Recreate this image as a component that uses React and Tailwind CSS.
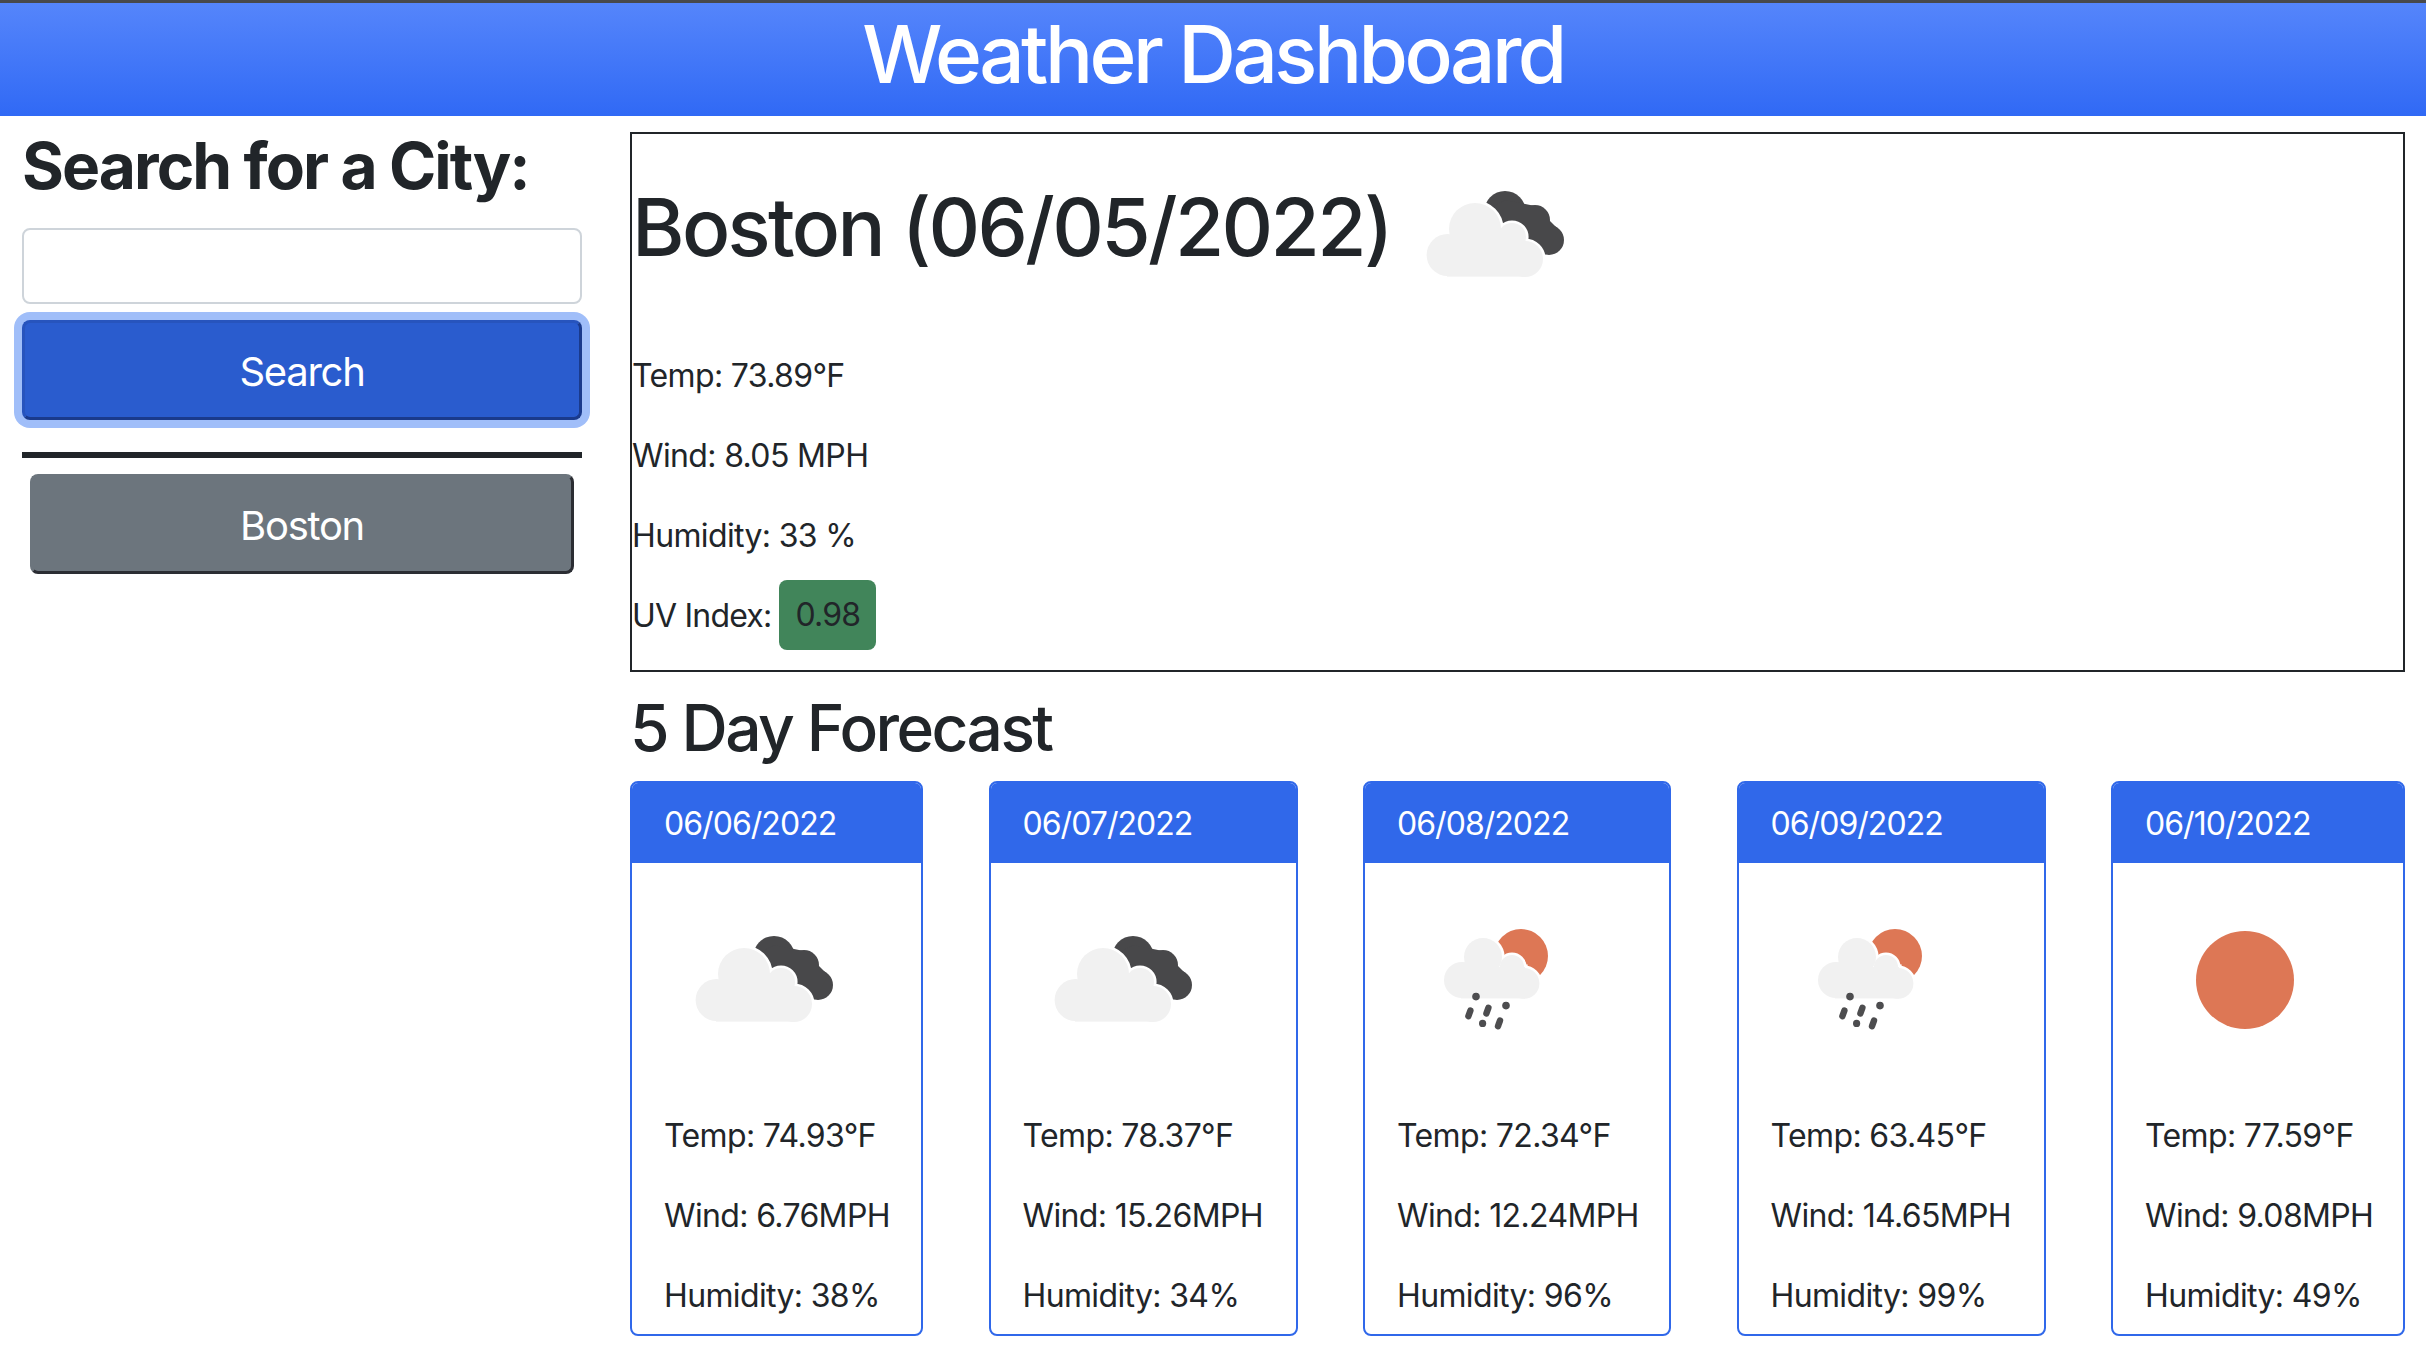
import React from "react";

const forecast = [
  { date: "06/06/2022", temp: "74.93", wind: "6.76", humidity: "38", icon: "clouds", width: "w-[293px]" },
  { date: "06/07/2022", temp: "78.37", wind: "15.26", humidity: "34", icon: "clouds", width: "w-[309px]" },
  { date: "06/08/2022", temp: "72.34", wind: "12.24", humidity: "96", icon: "rain", width: "w-[308px]" },
  { date: "06/09/2022", temp: "63.45", wind: "14.65", humidity: "99", icon: "rain", width: "w-[309px]" },
  { date: "06/10/2022", temp: "77.59", wind: "9.08", humidity: "49", icon: "sun", width: "w-[294px]" },
];

// cloud made of lobes, drawn twice: white halo first, then grey fill
const Cloud = ({ lobes, rect }) => (
  <>
    <g fill="#ffffff" stroke="#ffffff" strokeWidth="2.6">
      {lobes.map(([cx, cy, r]) => (
        <circle key={`${cx}-${cy}`} cx={cx} cy={cy} r={r} />
      ))}
      <rect x={rect[0]} y={rect[1]} width={rect[2]} height={rect[3]} />
    </g>
    <g fill="#f1f1f1">
      {lobes.map(([cx, cy, r]) => (
        <circle key={`${cx}-${cy}`} cx={cx} cy={cy} r={r} />
      ))}
      <rect x={rect[0]} y={rect[1]} width={rect[2]} height={rect[3]} />
    </g>
  </>
);

const WeatherIcon = ({ type }) => {
  if (type === "sun") {
    return (
      <svg viewBox="0 0 100 100" className="block w-[200px] h-[200px] shrink-0">
        <circle cx="50" cy="42.5" r="24.5" fill="#dd7755" />
      </svg>
    );
  }
  if (type === "rain") {
    return (
      <svg viewBox="0 0 100 100" className="block w-[200px] h-[200px] shrink-0">
        <circle cx="62" cy="30.5" r="13.5" fill="#dd7755" />
        <Cloud
          lobes={[[32.5, 42.5, 9], [43, 31, 9.5], [57.5, 36, 6], [63.5, 44.2, 7.7]]}
          rect={[32, 36, 32, 15.7]}
        />
        <g fill="#4d4d4f">
          <circle cx="39.5" cy="50.8" r="1.9" />
          <circle cx="54.5" cy="55.3" r="1.9" />
          <circle cx="42.8" cy="64.2" r="1.8" />
        </g>
        <g stroke="#4d4d4f" strokeWidth="3.2" strokeLinecap="round">
          <line x1="36.7" y1="57.8" x2="35.7" y2="60.6" />
          <line x1="45.7" y1="56.4" x2="44.7" y2="59.2" />
          <line x1="51.5" y1="62.8" x2="50.5" y2="65.6" />
        </g>
      </svg>
    );
  }
  return (
    <svg viewBox="0 0 100 100" className="block w-[200px] h-[200px] shrink-0">
      <g fill="#48484a">
        <circle cx="55" cy="31" r="10.5" />
        <circle cx="70" cy="35" r="7.5" />
        <circle cx="77" cy="45" r="7.5" />
        <polygon points="46,30 55,25 70,28 82,40 76,52 60,55 48,40" />
      </g>
      <Cloud
        lobes={[[26.3, 52.5, 10.5], [40, 39.5, 13], [58.5, 43.5, 7], [65, 54.5, 9]]}
        rect={[26, 44, 39, 19.3]}
      />
    </svg>
  );
};

const ForecastCard = ({ day }) => (
  <div className={`${day.width} h-[555px] border-2 border-[#3068ea] rounded-lg overflow-hidden`}>
    <div className="h-[80px] bg-[#3068ea] text-white pl-8 pt-[17px] leading-[48px] tracking-[-0.03em]">{day.date}</div>
    <div className="pl-8 pt-8">
      <WeatherIcon type={day.icon} />
      <p className="mt-[17px] mb-8 tracking-[-0.02em]">Temp: {day.temp}°F</p>
      <p className="mb-8 tracking-[-0.02em]">Wind: {day.wind}MPH</p>
      <p className="tracking-[-0.02em]">Humidity: {day.humidity}%</p>
    </div>
  </div>
);

export default function App() {
  return (
    <div className="min-h-screen bg-white font-['Inter',sans-serif] text-[32px] leading-[48px] text-[#212529]">
      {/* Header */}
      <header className="h-[116px] border-t-[3px] border-[#48494b] bg-gradient-to-b from-[#5585fb] to-[#3069f5] text-center">
        <h1 className="text-white text-[80px] leading-[102px] font-medium tracking-[-0.044em]">Weather Dashboard</h1>
      </header>

      <div className="flex">
        {/* Sidebar */}
        <aside className="w-[630px] pl-[22px] pr-[48px] shrink-0">
          <h2 className="mt-[12px] text-[64px] leading-[76px] font-bold tracking-[-0.03em]">Search for a City:</h2>
          <input className="block w-full h-[76px] mt-6 border-2 border-[#ced4da] rounded-lg bg-white" />
          <button className="block w-full h-[100px] mt-4 pt-[3px] bg-[#2a5cce] text-white text-[40px] rounded-lg border-[3px] border-[#2754bd] border-r-[#1a3a8c] border-b-[#1a3a8c] ring-8 ring-[#a0bef9] tracking-[-0.032em]">
            Search
          </button>
          <hr className="mt-8 border-t-[6px] border-[#212529]" />
          <button className="block w-[544px] h-[100px] mx-2 mt-4 pt-[3px] bg-[#6c757d] text-white text-[40px] rounded-lg border-[3px] border-[#6c757d] border-r-[#2b2d33] border-b-[#2b2d33] tracking-[-0.032em]">
            Boston
          </button>
        </aside>

        {/* Main */}
        <main className="flex-1 pr-[21px] pt-[16px]">
          <section className="border-2 border-[#212529] pt-4 h-[540px]">
            <div className="flex h-[202px]">
              <h2 className="mt-[29px] text-[80px] leading-[96px] font-medium tracking-[-0.033em]">Boston (06/05/2022)</h2>
              <div className="ml-[4px]">
                <WeatherIcon type="clouds" />
              </div>
            </div>
            <p className="mb-8 tracking-[-0.02em]">Temp: 73.89°F</p>
            <p className="mb-8 tracking-[-0.02em]">Wind: 8.05 MPH</p>
            <p className="mb-8 tracking-[-0.02em]">Humidity: 33 %</p>
            <p className="flex items-center gap-[8px] h-[48px] tracking-[-0.025em]">
              <span>UV Index:</span>
              <span className="mb-[3px] px-4 py-[11px] bg-[#41855a] rounded-lg">0.98</span>
            </p>
          </section>

          <h2 className="mt-[18px] mb-[15px] text-[64px] leading-[76px] font-medium tracking-[-0.04em]">5 Day Forecast</h2>
          <div className="flex justify-between">
            {forecast.map((day) => (
              <ForecastCard key={day.date} day={day} />
            ))}
          </div>
        </main>
      </div>
    </div>
  );
}
